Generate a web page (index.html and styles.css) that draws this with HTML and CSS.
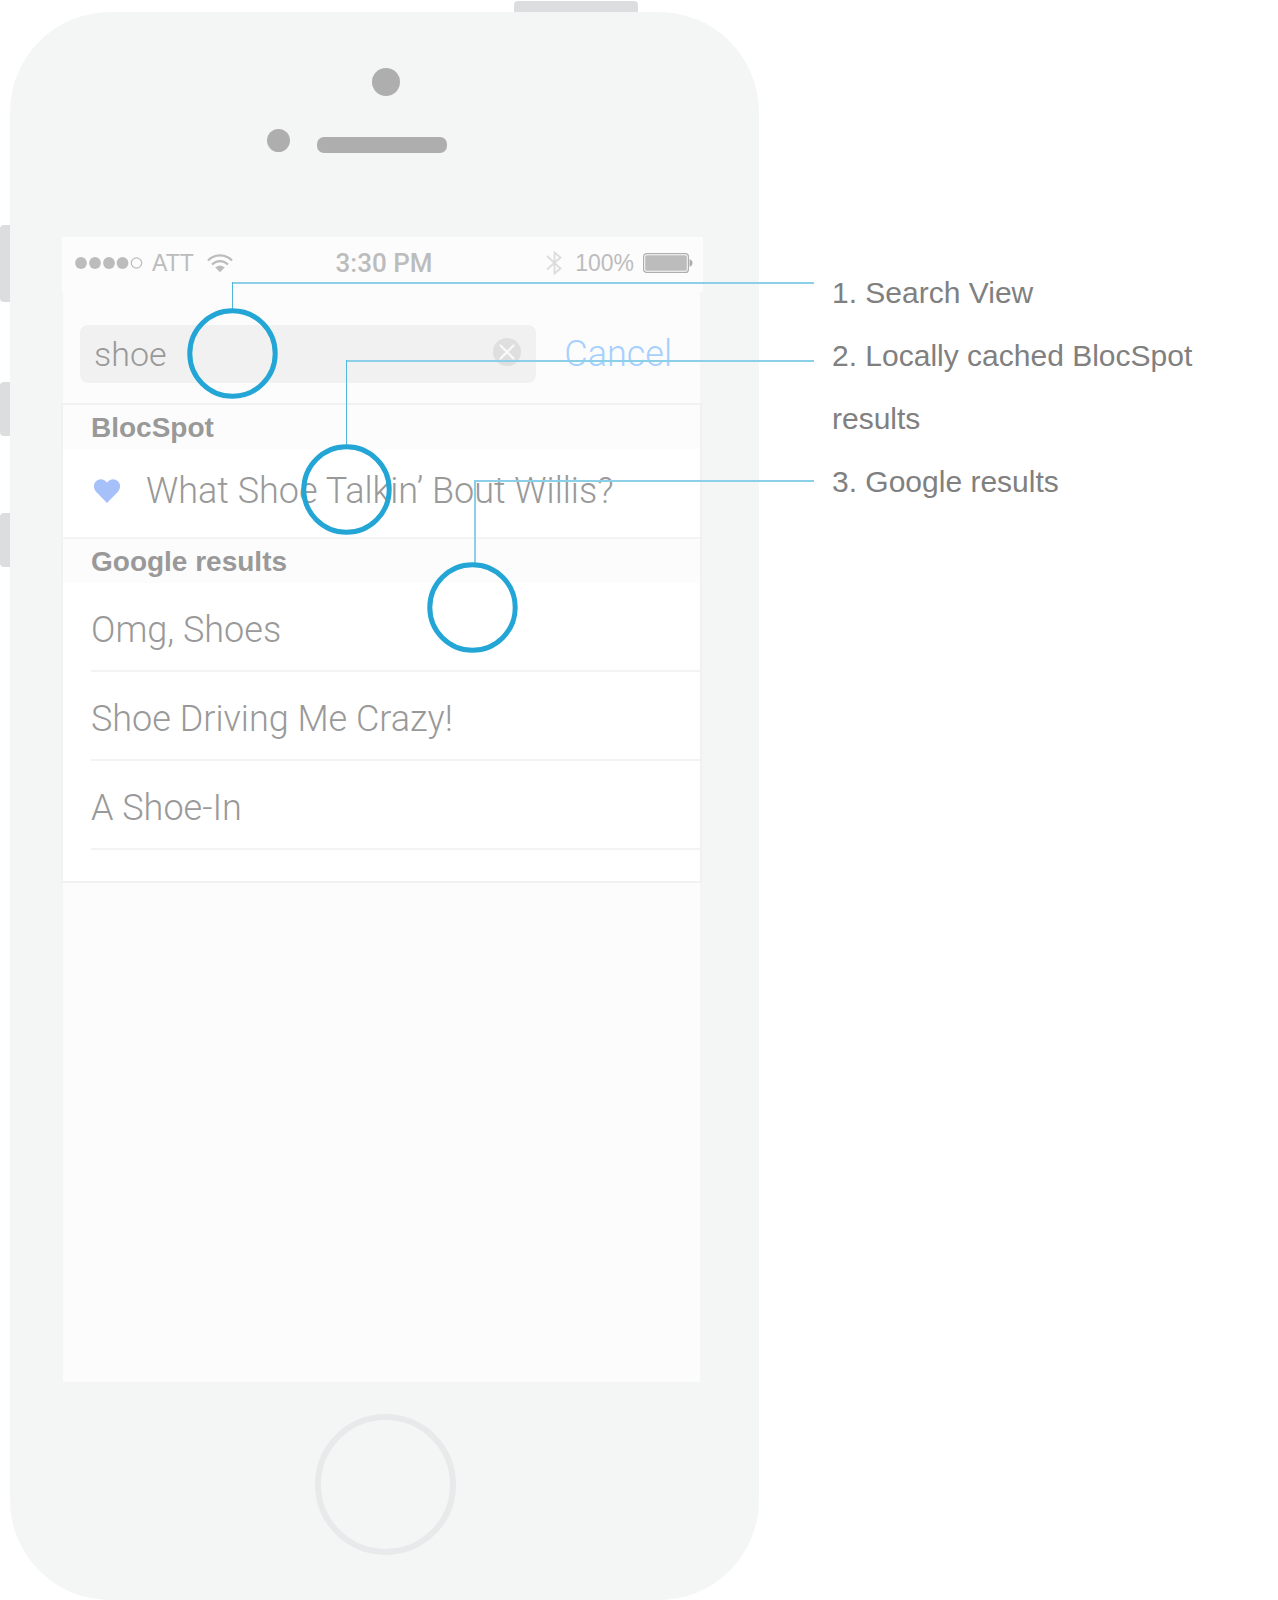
FILE: index.html
```html
<!DOCTYPE html>
<html lang="en">
<head>
<meta charset="utf-8">
<meta name="viewport" content="width=device-width, initial-scale=1">
<title>BlocSpot search</title>
<link rel="stylesheet" href="styles.css">
</head>
<body>
<main class="page">
  <section class="phone" aria-label="Phone">
    <span class="key key-power"></span>
    <span class="key key-mute"></span>
    <span class="key key-up"></span>
    <span class="key key-down"></span>

    <div class="hardware">
      <span class="camera"></span>
      <div class="earpiece">
        <span class="sensor"></span>
        <span class="speaker"></span>
      </div>
    </div>

    <div class="screen">
      <div class="status">
        <div class="status-left">
          <svg class="signal" width="68" height="12" viewBox="0 0 68 12" aria-hidden="true">
            <g fill="#bcbcbc"><circle cx="6" cy="6" r="5.9"/><circle cx="20" cy="6" r="5.9"/><circle cx="34" cy="6" r="5.9"/><circle cx="47.500" cy="6" r="5.900"/></g>
            <circle cx="61.500" cy="6" r="5.200" fill="none" stroke="#bcbcbc" stroke-width="1.200"/>
          </svg>
          <span class="carrier">ATT</span>
          <svg class="wifi" width="26" height="19" viewBox="0 0 26 19" aria-hidden="true">
            <g fill="none" stroke="#bcbcbc" stroke-width="2.200">
              <path d="M1 6.500C7.500-.4 18.500-.4 25 6.500"/>
              <path d="M5 10.600c4.500-4.700 11.500-4.700 16 0"/>
            </g>
            <path d="M8.300 13.500c2.700-2.500 6.700-2.500 9.400 0L13 18.300z" fill="#bcbcbc"/>
          </svg>
        </div>
        <span class="time">3:30 PM</span>
        <div class="status-right">
          <svg width="16" height="24" viewBox="0 0 16 24" aria-hidden="true">
            <path d="M1 5l13.500 12.500L8.500 22.500V1.500l6 5L1 18.500" fill="none" stroke="#dcdcdc" stroke-width="1.800"/>
          </svg>
          <span class="charge">100%</span>
          <svg class="battery" width="50" height="20" viewBox="0 0 50 20" aria-hidden="true">
            <rect x=".6" y=".6" width="44.800" height="18.800" rx="3" fill="none" stroke="#aeaeae" stroke-width="1.200"/>
            <rect x="2.200" y="2.200" width="41.600" height="15.600" rx="1.500" fill="#bcbcbc"/>
            <path d="M46.500 6.200c4 1 4 6.600 0 7.600z" fill="#aeaeae"/>
          </svg>
        </div>
      </div>

      <form class="search">
        <div class="field">
          <input class="query" type="text" value="shoe" aria-label="Search">
          <button class="clear" type="button" aria-label="Clear">
            <svg width="28" height="28" viewBox="0 0 28 28" aria-hidden="true">
              <circle cx="14" cy="14" r="14" fill="#dfdfdf"/>
              <path d="M7.500 7.500l13 13M20.500 7.500l-13 13" stroke="#fafafa" stroke-width="2.200" stroke-linecap="round"/>
            </svg>
          </button>
        </div>
        <button class="cancel" type="button">Cancel</button>
      </form>

      <div class="results">
        <h2 class="group">BlocSpot</h2>
        <ul class="rows rows-full">
          <li class="row">
            <svg class="heart" width="26" height="24" viewBox="0 0 26 24" aria-hidden="true">
              <path d="M13 24L2.500 13.200C-.8 9.500-.8 5 2 2.200 5-.8 10.500-.7 13 3.800 15.500-.7 21-.8 24 2.200c2.800 2.800 2.800 7.300-.5 11z" fill="#a6c0fa"/>
            </svg>
            <a class="link" href="#">What Shoe Talkin’ Bout Willis?</a>
          </li>
        </ul>
        <h2 class="group">Google results</h2>
        <ul class="rows">
          <li class="row"><a class="link" href="#">Omg, Shoes</a></li>
          <li class="row"><a class="link" href="#">Shoe Driving Me Crazy!</a></li>
          <li class="row"><a class="link" href="#">A Shoe-In</a></li>
        </ul>
      </div>
    </div>

    <span class="home"></span>

    <svg class="callouts" width="804" height="700" viewBox="10 12 804 700" aria-hidden="true">
      <g fill="none" stroke="#8bd0e8" stroke-width="2">
        <path d="M232 283H814"/>
        <path d="M346 361H814"/>
        <path d="M475 563V481H814"/>
      </g>
      <g fill="none" stroke="#4fb8de" stroke-width="1">
        <path d="M232.500 282V309"/>
        <path d="M346.500 360V445"/>
      </g>
      <g fill="none" stroke="#23a5d5" stroke-width="5">
        <circle cx="232.500" cy="353.500" r="42.700"/>
        <circle cx="346.500" cy="489.500" r="42.700"/>
        <circle cx="472.500" cy="607.500" r="42.700"/>
      </g>
    </svg>
  </section>

  <aside class="legend">
    <p class="note">1. Search View</p>
    <p class="note">2. Locally cached BlocSpot results</p>
    <p class="note">3. Google results</p>
  </aside>
</main>
</body>
</html>
```
FILE: styles.css
```css
* {
  box-sizing: border-box;
}

body {
  margin: 0;
  background: #fff;
  font-family: "Liberation Sans", Arial, sans-serif;
}

.page {
  display: grid;
  grid-template-columns: minmax(0, 749px) minmax(0, 1fr);
  align-items: start;
  column-gap: 73px;
  padding: 12px 48px 0 10px;
}

/* Phone body */

.phone {
  position: relative;
  display: flex;
  flex-direction: column;
  padding: 0 59px 45px 53px;
  border-radius: 100px;
  background: #f4f6f5;
}

.key {
  position: absolute;
  left: -10px;
  width: 10px;
  height: 54px;
  border-radius: 4px 0 0 4px;
  background: #dcdddf;
}

.key-power {
  top: -11px;
  left: 504px;
  width: 124px;
  height: 11px;
  border-radius: 4px 4px 0 0;
}

.key-mute {
  top: 213px;
  height: 77px;
}

.key-up {
  top: 370px;
}

.key-down {
  top: 501px;
}

.hardware {
  display: flex;
  flex-direction: column;
  align-items: center;
  gap: 33px;
  height: 225px;
  padding: 56px 0 0 9px;
}

.camera {
  width: 28px;
  height: 28px;
  border-radius: 50%;
  background: #aeaeae;
}

.earpiece {
  display: flex;
  align-items: flex-start;
  gap: 27px;
  padding-right: 58px;
}

.sensor {
  width: 23px;
  height: 23px;
  border-radius: 50%;
  background: #aeaeae;
}

.speaker {
  width: 130px;
  height: 16px;
  margin-top: 8px;
  border-radius: 7px;
  background: #aeaeae;
}

.home {
  align-self: center;
  width: 141px;
  height: 141px;
  margin-top: 32px;
  margin-left: 7px;
  border: 6px solid #e8e9ea;
  border-radius: 50%;
}

/* Screen */

.screen {
  min-height: 1145px;
  background: #fcfcfc;
}

.status {
  display: grid;
  grid-template-columns: 1fr auto 1fr;
  align-items: center;
  height: 55px;
  margin: 0 -3px 0 -1px;
  padding: 0 10px 3px 13px;
  background: #fcfcfc;
  color: #bcbcbc;
  font-size: 23px;
  line-height: 28px;
}

.status-left,
.status-right {
  display: flex;
  align-items: center;
}

.status-right {
  justify-content: flex-end;
}

.carrier {
  margin: 0 13px 0 9px;
}

.time {
  font-family: Roboto, sans-serif;
  font-size: 26px;
  font-weight: 500;
}

.charge {
  margin: 0 9px 0 13px;
}

.search {
  display: flex;
  align-items: center;
  gap: 28px;
  margin: 0;
  padding: 33px 28px 20px 17px;
}

.field {
  display: flex;
  flex: 1;
  align-items: center;
  min-width: 0;
  height: 58px;
  padding: 0 15px 0 14px;
  border-radius: 8px;
  background: #f1f1f1;
}

.query {
  flex: 1;
  min-width: 0;
  padding: 0;
  border: 0;
  outline: 0;
  background: transparent;
  color: #999;
  font: 300 34px/44px Roboto, sans-serif;
}

.clear,
.cancel {
  padding: 0;
  border: 0;
  background: none;
  cursor: pointer;
}

.clear {
  display: flex;
  margin-bottom: 4px;
}

.cancel {
  color: #a6d0ff;
  font: 300 36px/44px Roboto, sans-serif;
}

/* Results */

.results {
  margin: 0 -2px;
  padding-bottom: 31px;
  border: 2px solid #f1f1f1;
  background: #fff;
}

.group {
  margin: 0;
  padding: 2px 0 0 28px;
  background: #fcfcfc;
  color: #999;
  font-size: 28px;
  font-weight: 700;
  line-height: 42px;
}

.rows {
  margin: 0;
  padding: 0 0 0 28px;
  list-style: none;
}

.row {
  display: flex;
  align-items: center;
  gap: 26px;
  height: 89px;
  padding-top: 6px;
  border-bottom: 2px solid #f3f3f3;
}

.rows-full {
  padding: 0;
}

.rows-full .row {
  height: 90px;
  padding: 0 0 5px 31px;
}

.link {
  color: #999;
  font: 300 36px/44px Roboto, sans-serif;
  text-decoration: none;
}

/* Callouts and legend */

.callouts {
  position: absolute;
  top: 0;
  left: 0;
  pointer-events: none;
}

.legend {
  padding-top: 249px;
}

.note {
  margin: 0;
  color: #808080;
  font-size: 30px;
  line-height: 63px;
}
```
